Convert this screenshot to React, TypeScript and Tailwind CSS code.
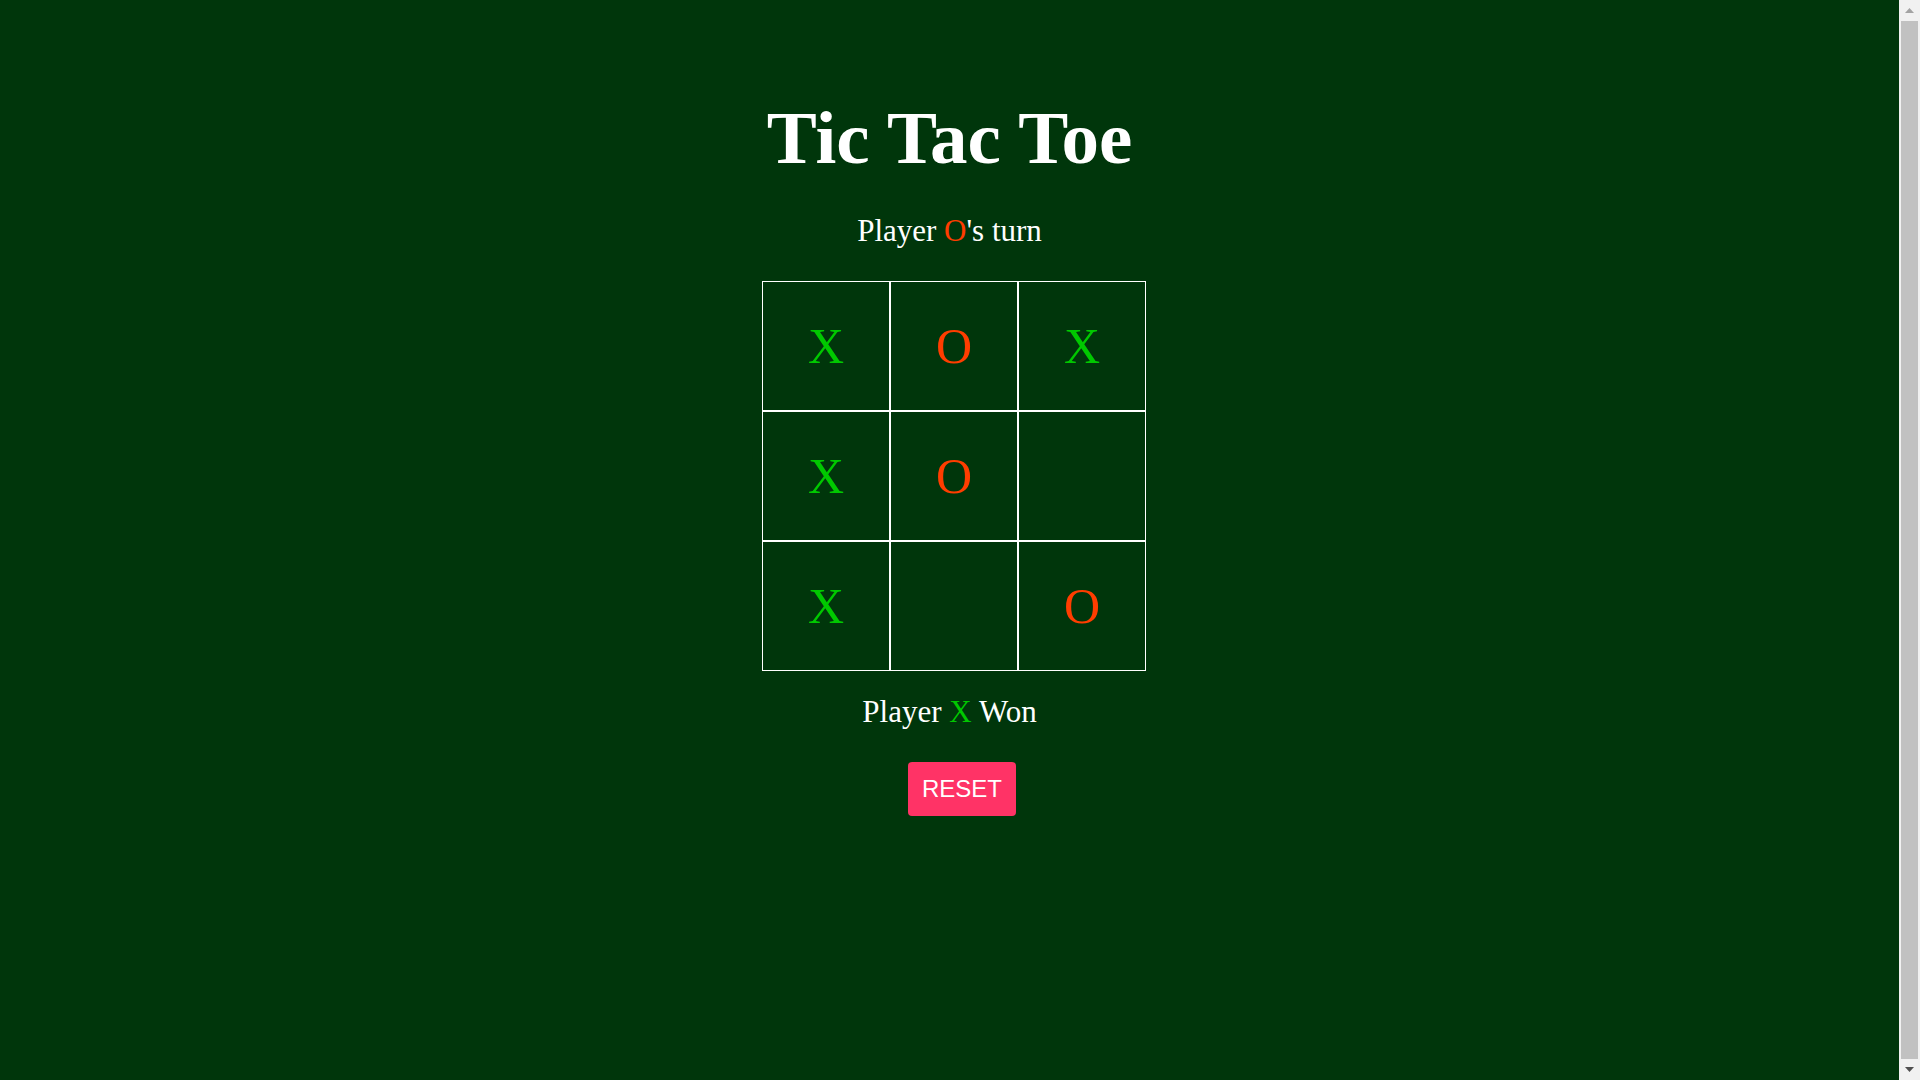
import { useState } from "react";

type Mark = "X" | "O" | null;

const initialBoard: Mark[] = ["X", "O", "X", "X", "O", null, "X", null, "O"];

const markColor = (mark: Mark) => (mark === "X" ? "text-[#00c800]" : "text-[#ff3d00]");

const Cell = ({ value, onClick }: { value: Mark; onClick: () => void }) => (
  <button
    type="button"
    onClick={onClick}
    className={`flex h-[130px] w-[128px] items-center justify-center border border-white text-[50px] leading-none ${markColor(value)}`}
  >
    {value}
  </button>
);

const FakeScrollbar = () => (
  <div className="flex h-full w-[21px] shrink-0 flex-col bg-[#f1f1f1]">
    <div className="flex h-[21px] items-center justify-center">
      <svg width="9" height="5" viewBox="0 0 9 5">
        <polygon points="0,5 4.5,0 9,5" fill="#a3a3a3" />
      </svg>
    </div>
    <div className="mx-[2px] flex-1 bg-[#c1c1c1]" />
    <div className="flex h-[21px] items-center justify-center">
      <svg width="9" height="5" viewBox="0 0 9 5">
        <polygon points="0,0 9,0 4.5,5" fill="#505050" />
      </svg>
    </div>
  </div>
);

export default function App() {
  const [board, setBoard] = useState<Mark[]>(initialBoard);
  const [turn, setTurn] = useState<"X" | "O">("O");
  const [winner, setWinner] = useState<Mark>("X");

  const play = (index: number) => {
    if (board[index] || winner) return;
    const next = [...board];
    next[index] = turn;
    setBoard(next);
    setTurn(turn === "X" ? "O" : "X");
  };

  const reset = () => {
    setBoard(Array(9).fill(null));
    setTurn("X");
    setWinner(null);
  };

  return (
    <div className="flex h-screen w-full overflow-hidden bg-[#00360b]">
      <main className="flex flex-1 flex-col items-center font-['Liberation_Serif','Times_New_Roman',serif] text-white">
        <h1 className="pt-[98px] text-[75px] font-bold leading-[80px]">Tic Tac Toe</h1>

        <p className="mt-[35px] text-[31px] leading-[36px]">
          Player <span className={markColor(turn)}>{turn}</span>'s turn
        </p>

        <div className="mt-[32px] ml-[9px] grid grid-cols-3">
          {board.map((value, index) => (
            <Cell key={index} value={value} onClick={() => play(index)} />
          ))}
        </div>

        <p className="mt-[23px] text-[31px] leading-[36px]">
          {winner ? (
            <>
              Player <span className={markColor(winner)}>{winner}</span> Won
            </>
          ) : (
            "\u00a0"
          )}
        </p>

        <button
          type="button"
          onClick={reset}
          className="mt-[32px] ml-[25px] rounded-[4px] bg-[#ff3366] px-[14px] py-[13px] font-['Liberation_Sans',Arial,sans-serif] text-[24px] leading-[28px] text-white"
        >
          RESET
        </button>
      </main>
      <FakeScrollbar />
    </div>
  );
}
